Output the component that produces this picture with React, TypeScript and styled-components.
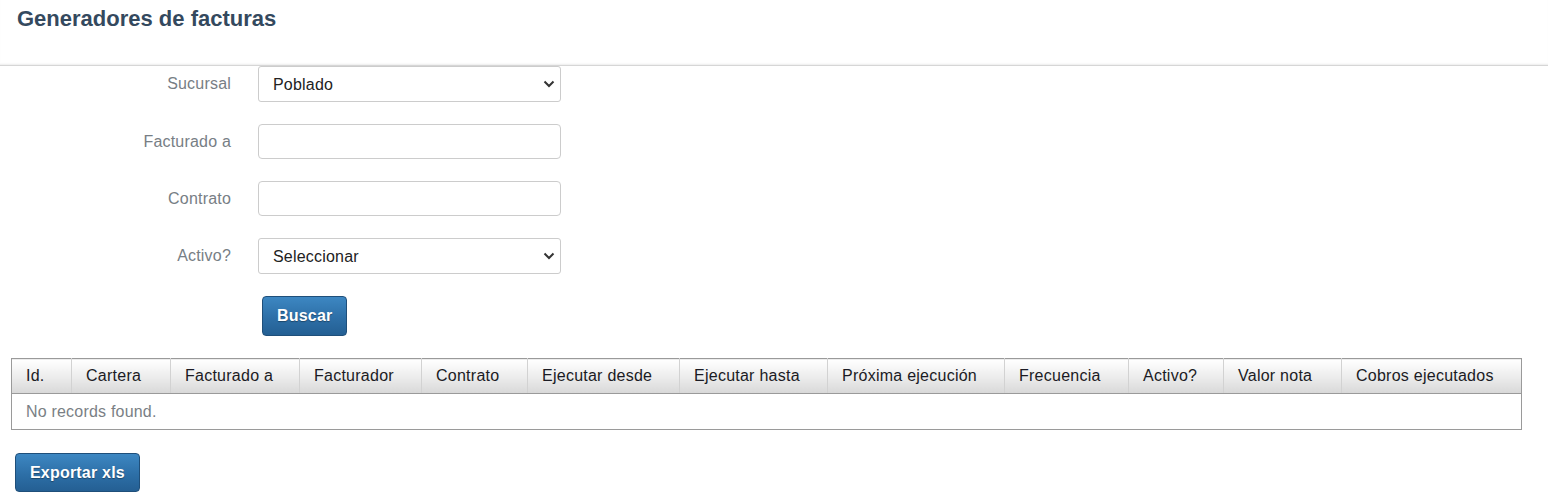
import React from "react"
import styled, { createGlobalStyle } from "styled-components"

const GlobalStyle = createGlobalStyle`
  html, body {
    margin: 0;
    padding: 0;
    background: #ffffff;
    font-family: "Liberation Sans", Arial, sans-serif;
  }
`

const columns = [
  { name: "Id.", width: 60 },
  { name: "Cartera", width: 99 },
  { name: "Facturado a", width: 129 },
  { name: "Facturador", width: 122 },
  { name: "Contrato", width: 106 },
  { name: "Ejecutar desde", width: 152 },
  { name: "Ejecutar hasta", width: 148 },
  { name: "Próxima ejecución", width: 177 },
  { name: "Frecuencia", width: 124 },
  { name: "Activo?", width: 95 },
  { name: "Valor nota", width: 118 },
  { name: "Cobros ejecutados", width: 180 },
]

const Chevron = () => (
  <ChevronIcon width="12" height="8" viewBox="0 0 12 8">
    <path d="M1.5 1.5 L6 6 L10.5 1.5" fill="none" stroke="#333" strokeWidth="2" />
  </ChevronIcon>
)

const App = () => {
  return (
    <Page>
      <GlobalStyle />
      <Header>
        <Title>Generadores de facturas</Title>
      </Header>

      <Form>
        <Label>Sucursal</Label>
        <SelectWrap>
          <Select defaultValue="poblado">
            <option value="poblado">Poblado</option>
          </Select>
          <Chevron />
        </SelectWrap>

        <Label>Facturado a</Label>
        <Input type="text" />

        <Label>Contrato</Label>
        <Input type="text" />

        <Label>Activo?</Label>
        <SelectWrap>
          <Select defaultValue="">
            <option value="">Seleccionar</option>
          </Select>
          <Chevron />
        </SelectWrap>

        <span />
        <ButtonCell>
          <Button>Buscar</Button>
        </ButtonCell>
      </Form>

      <TableWrap>
        <Table>
          <colgroup>
            {columns.map((c) => (
              <col key={c.name} style={{ width: c.width }} />
            ))}
          </colgroup>
          <thead>
            <tr>
              {columns.map((c) => (
                <Th key={c.name}>{c.name}</Th>
              ))}
            </tr>
          </thead>
          <tbody>
            <tr>
              <EmptyCell colSpan={columns.length}>No records found.</EmptyCell>
            </tr>
          </tbody>
        </Table>
      </TableWrap>

      <Footer>
        <Button $wide>Exportar xls</Button>
      </Footer>
    </Page>
  )
}

const Page = styled.div`
  width: 1548px;
  min-height: 502px;
`
const Header = styled.div`
  box-sizing: border-box;
  height: 66px;
  padding: 0 17px;
  border-bottom: 1px solid #d6d6d6;
  box-shadow: 0 -2px 2px -1px #ededed inset;
`
const Title = styled.h1`
  margin: 0;
  padding-top: 6px;
  font-size: 22px;
  line-height: 26px;
  font-weight: 700;
  color: #34495e;
`
const Form = styled.div`
  display: grid;
  grid-template-columns: 231px 303px;
  column-gap: 27px;
  row-gap: 22px;
  align-items: center;
`
const Label = styled.label`
  text-align: right;
  font-size: 16px;
  letter-spacing: 0.2px;
  color: #777e85;
`
const fieldBase = `
  box-sizing: border-box;
  width: 303px;
  height: 35px;
  border: 1px solid #cccccc;
  border-radius: 4px;
  background: #ffffff;
  font-family: "Liberation Sans", Arial, sans-serif;
  font-size: 16px;
  letter-spacing: 0.2px;
  color: #222222;
  outline: none;
`
const Input = styled.input`
  ${fieldBase}
  padding: 0 12px;
`
const SelectWrap = styled.div`
  position: relative;
  width: 303px;
  height: 36px;
`
const Select = styled.select`
  ${fieldBase}
  height: 36px;
  appearance: none;
  -webkit-appearance: none;
  padding: 0 30px 0 14px;
  border-radius: 3px;
`
const ChevronIcon = styled.svg`
  position: absolute;
  right: 6px;
  top: 14px;
  pointer-events: none;
`
const ButtonCell = styled.div`
  padding-left: 4px;
`
const Button = styled.button<{ $wide?: boolean }>`
  box-sizing: border-box;
  height: ${(p) => (p.$wide ? "39px" : "40px")};
  padding: 0 14px;
  border: 1px solid #1f4f7a;
  border-radius: 4px;
  background: linear-gradient(to bottom, #3d87c2 0%, #2d6fa7 55%, #245f93 100%);
  color: #ffffff;
  font-family: "Liberation Sans", Arial, sans-serif;
  font-size: 16px;
  font-weight: 700;
  letter-spacing: 0.2px;
  text-shadow: 0 1px 1px rgba(0, 0, 0, 0.35);
  cursor: pointer;
`
const TableWrap = styled.div`
  padding: 22px 0 0 11px;
`
const Table = styled.table`
  width: 1510px;
  table-layout: fixed;
  border-collapse: collapse;
  border: 1px solid #9a9a9a;
`
const Th = styled.th`
  height: 35px;
  box-sizing: border-box;
  padding: 0 14px;
  text-align: left;
  font-weight: 400;
  font-size: 16px;
  letter-spacing: 0.25px;
  color: #1b1b24;
  white-space: nowrap;
  border-left: 1px solid #d2d2d2;
  border-bottom: 1px solid #9a9a9a;
  background: linear-gradient(to bottom, #ffffff 0%, #ededed 50%, #d8d8d8 100%);
  &:first-child {
    border-left: none;
  }
`
const EmptyCell = styled.td`
  height: 35px;
  padding: 0 14px;
  font-size: 16px;
  letter-spacing: 0.2px;
  color: #7a7f85;
`
const Footer = styled.div`
  padding: 23px 0 0 15px;
`

export default App
